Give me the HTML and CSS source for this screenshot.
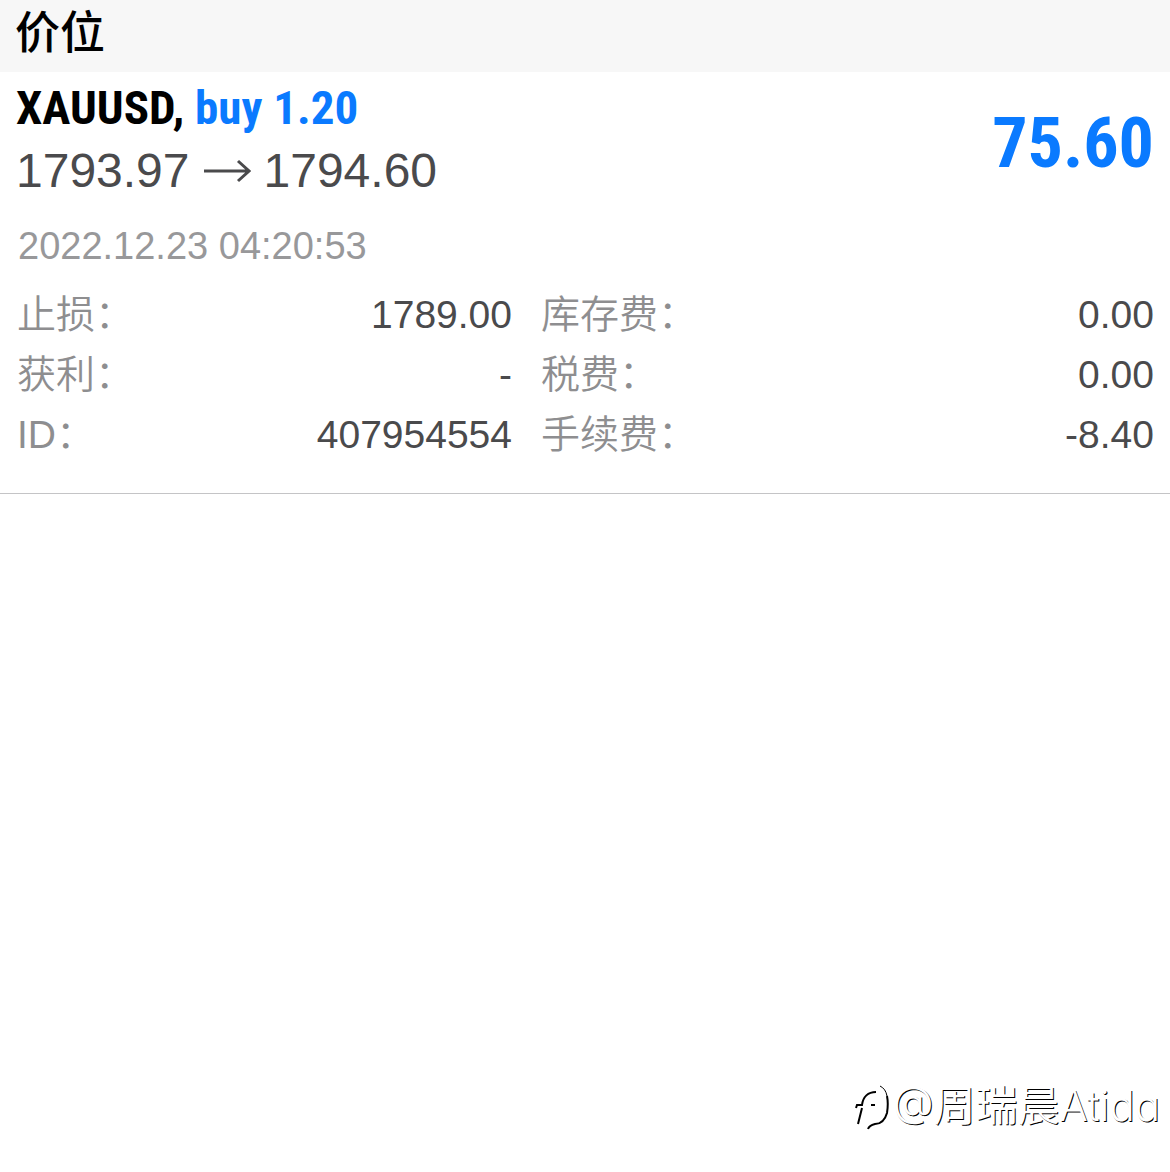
FILE: index.html
```html
<!DOCTYPE html>
<html lang="zh-CN">
<head>
    <meta charset="UTF-8">
    <meta name="viewport" content="width=device-width, initial-scale=1.0">
    <title>价位</title>
    <link rel="stylesheet" href="styles.css">
</head>
<body>
    <header class="section-header">
        <h1>价位</h1>
    </header>
    <main class="position">
        <div class="summary">
            <div>
                <h2 class="symbol">XAUUSD, <span class="side">buy 1.20</span></h2>
                <p class="prices">
                    <span>1793.97</span>
                    <svg class="arrow" viewBox="0 0 48 24" role="img" aria-label="至">
                        <path d="M1 12H46M35 2L46 12L35 22"/>
                    </svg>
                    <span>1794.60</span>
                </p>
            </div>
            <p class="profit">75.60</p>
        </div>
        <p class="time">2022.12.23 04:20:53</p>
        <div class="details">
            <dl>
                <div class="row"><dt>止损：</dt><dd>1789.00</dd></div>
                <div class="row"><dt>获利：</dt><dd>-</dd></div>
                <div class="row"><dt>ID：</dt><dd>407954554</dd></div>
            </dl>
            <dl>
                <div class="row"><dt>库存费：</dt><dd>0.00</dd></div>
                <div class="row"><dt>税费：</dt><dd>0.00</dd></div>
                <div class="row"><dt>手续费：</dt><dd>-8.40</dd></div>
            </dl>
        </div>
    </main>
    <footer class="watermark">
        <svg class="logo" viewBox="0 0 38 48" aria-hidden="true">
            <path d="M1 26L2 23H7C8 15 13 10 21 10M7 26L3 42M16 23H20"/>
            <path class="thin" d="M25 4C29 6 31 9 32 14"/>
            <path d="M32 14C33 19 33 25 32 31C30 38 26 42 20 42C16 43 14 44 13 47"/>
        </svg>
        <span>@周瑞晨Atida</span>
    </footer>
</body>
</html>
```

FILE: styles.css
```css
* {
    box-sizing: border-box;
}

body {
    display: flex;
    flex-direction: column;
    min-height: 100vh;
    margin: 0;
    background-color: #fff;
    color: #4a4a4c;
    font-family: "Liberation Sans", "Noto Sans CJK SC", sans-serif;
}

h1, h2, p, dl, dd {
    margin: 0;
}

.section-header {
    padding: 0 15px 4px;
    background-color: #f7f7f7;
}

.section-header h1 {
    color: #000;
    font-size: 45px;
    font-weight: 500;
    line-height: 68px;
}

.position {
    padding: 8px 16px 28px;
    border-bottom: 1px solid #c4c4c6;
}

.summary {
    display: flex;
    justify-content: space-between;
    align-items: center;
}

.symbol {
    color: #000;
    font-family: "Roboto Condensed", Roboto, sans-serif;
    font-size: 47px;
    font-weight: bold;
    line-height: 56px;
}

.side, .profit {
    color: #0a7aff;
}

.prices {
    display: flex;
    align-items: center;
    gap: 13px;
    font-size: 48px;
    line-height: 70px;
}

.arrow {
    width: 48px;
    height: 24px;
    fill: none;
    stroke: #4a4a4c;
    stroke-width: 3;
}

.profit {
    font-family: "Roboto Condensed", Roboto, sans-serif;
    font-size: 70px;
    font-weight: bold;
}

.time {
    padding: 1px 2px 0;
    color: #98989a;
    font-size: 38px;
    line-height: 78px;
}

.details {
    display: grid;
    grid-template-columns: 496px 1fr;
    gap: 28px;
    font-size: 39px;
    line-height: 60px;
}

.row {
    display: flex;
    justify-content: space-between;
}

dt {
    padding-left: 1px;
    color: #8e8e90;
    font-weight: 350;
}

.watermark {
    display: flex;
    justify-content: flex-end;
    align-items: center;
    margin-top: auto;
    padding: 0 10px 36px;
    color: #fff;
    font-family: Inter, "Noto Sans CJK SC", sans-serif;
    font-size: 42px;
    font-weight: 350;
    line-height: 60px;
    font-feature-settings: "cv11", "case";
    text-shadow: 1px 1px 0 #000;
}

.logo {
    width: 38px;
    height: 48px;
    fill: none;
    stroke: #000;
    stroke-width: 2;
}

.logo .thin {
    stroke-width: 1;
}
```
